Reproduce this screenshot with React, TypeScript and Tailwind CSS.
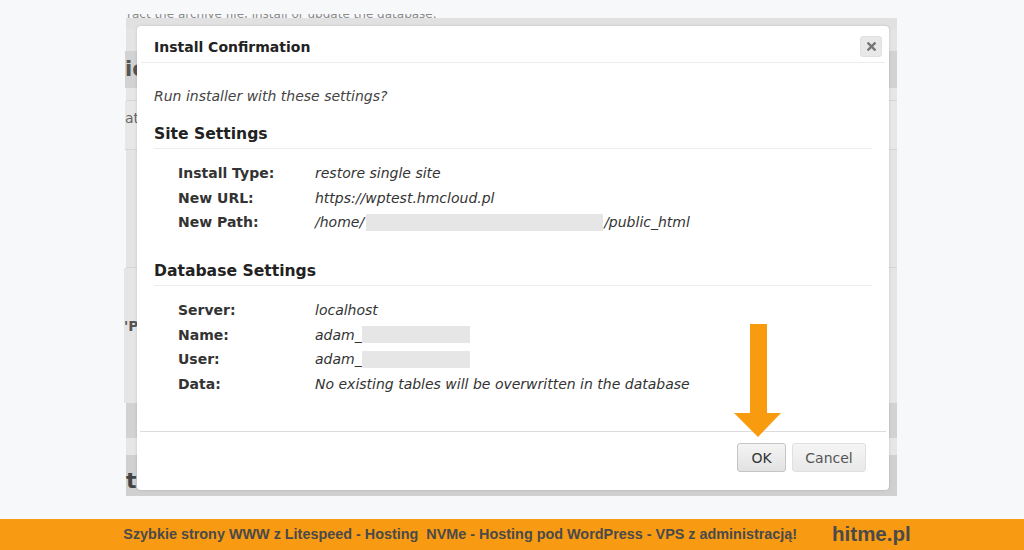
import React from "react";

const dv = { fontFamily: '"DejaVu Sans", Verdana, sans-serif' };
const lib = { fontFamily: '"Liberation Sans", Arial, sans-serif' };

function Row({ label, children }: { label: string; children: React.ReactNode }) {
  return (
    <div className="flex pl-[24px] leading-[24.5px] text-[14px] text-[#333]">
      <div className="w-[137px] font-bold shrink-0">{label}</div>
      <div className="italic flex items-center">{children}</div>
    </div>
  );
}

function Redact({ w, ml }: { w: number; ml: number }) {
  return <span className="inline-block h-[17px] bg-[#e6e6e6] mr-[1px]" style={{ width: w, marginLeft: ml }} />;
}

export default function App() {
  return (
    <div className="w-[1024px] h-[550px] bg-[#f7f8fa] flex flex-col overflow-hidden" style={dv}>
      {/* cut-off text above the page */}
      <div className="h-[18px] relative">
        <div className="absolute left-[127px] top-[14px] h-[5px] overflow-hidden">
          <div className="-mt-[6px] text-[12px] leading-[12px] text-[#8a8a8a] whitespace-nowrap">
            ract the archive file, install or update the database.
          </div>
        </div>
      </div>

      {/* backdrop page */}
      <div className="relative ml-[126px] w-[771px] h-[478px] flex flex-col bg-[#e5e5e5]">
        <div className="h-[33px] bg-[#e4e4e4] border-t-[11px] border-[#e1e1e1]" />
        <div className="h-[37px] bg-[#d2d2d2] flex items-center text-[21px] font-bold text-[#555] leading-none -ml-[1px]">ie</div>
        <div className="h-[13px] bg-[#e6e6e6] border-b border-[#d6d6d6]" />
        <div className="h-[49px] bg-[#e7e7e7] border-b border-[#d6d6d6] text-[14px] text-[#666] pt-[7px] leading-[20px] -ml-[1px]">at</div>
        <div className="h-[118px] bg-[#e4e4e4] border-b border-[#d6d6d6]" />
        <div className="h-[135px] bg-[#e5e5e5] text-[14px] font-bold text-[#555] pt-[48px] leading-[20px] -ml-[2px]">'P</div>
        <div className="h-[35px] bg-[#d2d2d2]" />
        <div className="h-[17px] bg-[#e6e6e6]" />
        <div className="flex-1 bg-[#d0d0d0] text-[22px] font-bold text-[#444] pt-[14px] leading-[24px]">t</div>

        {/* modal dialog */}
        <div className="absolute left-[11px] top-[8px] w-[752px] h-[464px] bg-white rounded-[4px] shadow-[0_0_3px_rgba(0,0,0,0.15)] flex flex-col">
          <div className="h-[37px] mx-[4px] border-b border-[#ececec] flex items-start justify-between">
            <div className="pl-[13px] pt-[11px] leading-[20px] text-[14px] font-bold text-[#222]">Install Confirmation</div>
            <div className="mt-[10px] mr-[3px] w-[22px] h-[21px] rounded-[3px] bg-[#e8e8e8] border border-[#e0e0e0] flex items-center justify-center">
              <svg width="9" height="9" viewBox="0 0 10 10">
                <path d="M1.5 1.5 L8.5 8.5 M8.5 1.5 L1.5 8.5" stroke="#777" strokeWidth="2.6" strokeLinecap="square" />
              </svg>
            </div>
          </div>

          <div className="h-[368px] px-[17px] flex flex-col">
            <div className="mt-[23px] leading-[20px] text-[14px] italic text-[#444]">Run installer with these settings?</div>
            <div className="mt-[15px] h-[28px] border-b border-[#ececec] text-[15.6px] font-bold leading-[26px] text-[#222]">Site Settings</div>
            <div className="mt-[12px]">
              <Row label="Install Type:">restore single site</Row>
              <Row label="New URL:">https://wptest.hmcloud.pl</Row>
              <Row label="New Path:">
                /home/<Redact w={237} ml={2} />/public_html
              </Row>
            </div>
            <div className="mt-[23.5px] h-[28px] border-b border-[#ececec] text-[15.6px] font-bold leading-[26px] text-[#222]">Database Settings</div>
            <div className="mt-[12px]">
              <Row label="Server:">localhost</Row>
              <Row label="Name:">
                adam_<Redact w={108} ml={0} />
              </Row>
              <Row label="User:">
                adam_<Redact w={108} ml={0} />
              </Row>
              <Row label="Data:">No existing tables will be overwritten in the database</Row>
            </div>
          </div>

          <div className="h-[59px] mx-[3px] border-t border-[#dcdcdc] pt-[11px] pr-[20px] flex justify-end gap-[6px]">
            <button className="w-[49px] h-[29px] rounded-[3px] border border-[#c4c4c4] bg-gradient-to-b from-[#f4f4f4] to-[#e2e2e2] text-[14px] text-[#333] pt-[1px]" style={dv}>
              OK
            </button>
            <button className="w-[74px] h-[29px] rounded-[3px] border border-[#e0e0e0] bg-gradient-to-b from-[#f5f5f5] to-[#e9e9e9] text-[14px] text-[#555] pt-[1px]" style={dv}>
              Cancel
            </button>
          </div>

          {/* orange arrow */}
          <svg className="absolute left-[597px] top-[298px]" width="48" height="114" viewBox="0 0 48 114">
            <rect x="16" y="0" width="17" height="90" fill="#f99b0f" />
            <polygon points="0,89 47,89 24,113" fill="#f99b0f" />
          </svg>
        </div>
      </div>

      <div className="h-[23px]" />

      {/* banner */}
      <div className="h-[31px] bg-[#f99b12] flex items-center justify-center gap-[35px] pl-[10px]" style={lib}>
        <span className="text-[14.4px] font-bold text-[#4a4a4a] whitespace-pre">
          Szybkie strony WWW z Litespeed - Hosting  NVMe - Hosting pod WordPress - VPS z administracją!
        </span>
        <span className="text-[20.5px] font-bold text-[#4a4a4a]">hitme.pl</span>
      </div>
    </div>
  );
}
